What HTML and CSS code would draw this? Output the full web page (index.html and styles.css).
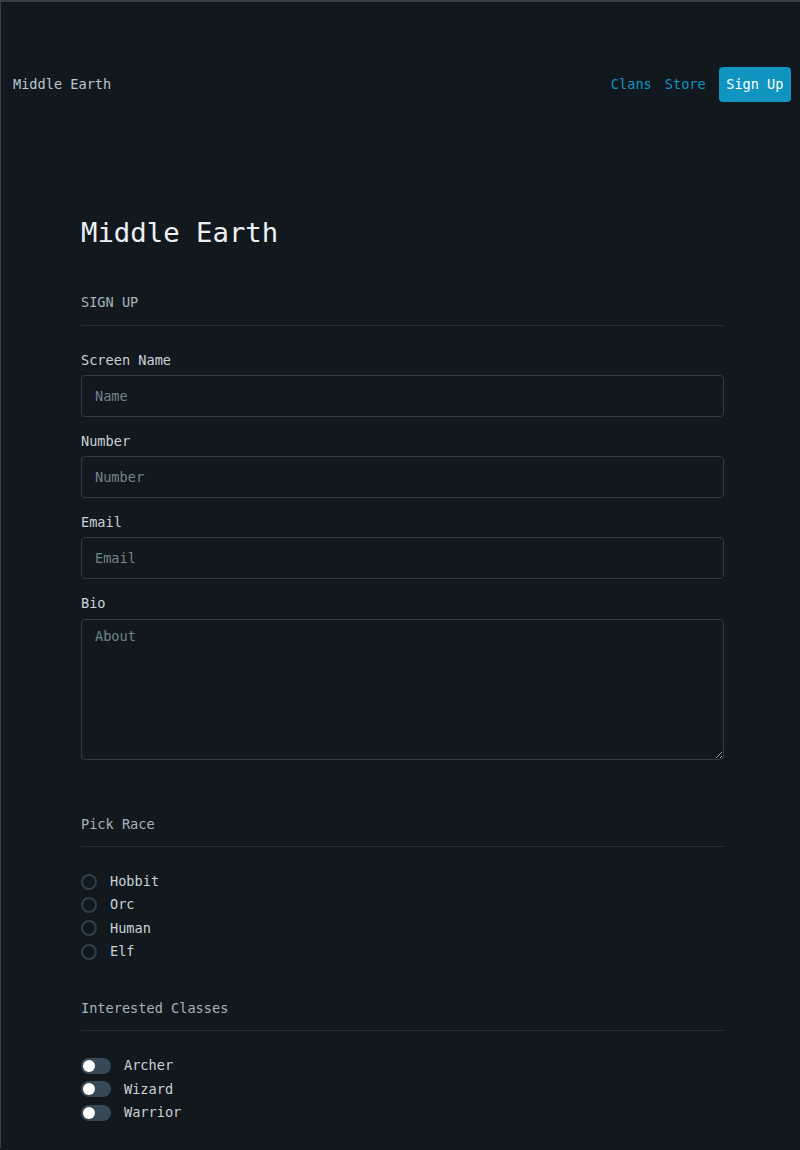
FILE: index.html
```html
<!DOCTYPE html>
<html lang="en">
<head>
<meta charset="utf-8">
<title>Middle Earth</title>
<link rel="stylesheet" href="styles.css">
</head>
<body>
<div class="frame">
  <header class="topbar">
    <a class="brand" href="#">Middle Earth</a>
    <nav class="nav">
      <a class="nav-link" href="#">Clans</a>
      <a class="nav-link" href="#">Store</a>
      <a class="nav-btn" href="#">Sign Up</a>
    </nav>
  </header>

  <main class="main">
    <h1 class="title">Middle Earth</h1>

    <form class="form">
      <h2 class="section-head">SIGN UP</h2>

      <div class="field">
        <label class="label" for="name">Screen Name</label>
        <input class="input" id="name" type="text" placeholder="Name">
      </div>
      <div class="field">
        <label class="label" for="number">Number</label>
        <input class="input" id="number" type="text" placeholder="Number">
      </div>
      <div class="field">
        <label class="label" for="email">Email</label>
        <input class="input" id="email" type="text" placeholder="Email">
      </div>
      <div class="field">
        <label class="label label-bio" for="bio">Bio</label>
        <textarea class="textarea" id="bio" placeholder="About"></textarea>
      </div>

      <h2 class="section-head section-race">Pick Race</h2>
      <div class="choices">
        <label class="choice"><span class="radio"></span>Hobbit</label>
        <label class="choice"><span class="radio"></span>Orc</label>
        <label class="choice"><span class="radio"></span>Human</label>
        <label class="choice"><span class="radio"></span>Elf</label>
      </div>

      <h2 class="section-head section-classes">Interested Classes</h2>
      <div class="choices toggles">
        <label class="choice"><span class="switch"><span class="knob"></span></span>Archer</label>
        <label class="choice"><span class="switch"><span class="knob"></span></span>Wizard</label>
        <label class="choice"><span class="switch"><span class="knob"></span></span>Warrior</label>
      </div>
    </form>
  </main>
</div>
</body>
</html>
```

FILE: styles.css
```css
html, body {
  margin: 0;
  padding: 0;
  background: #11191f;
}

body {
  font-family: "DejaVu Sans Mono", "Liberation Mono", monospace;
  font-size: 13.6px;
  line-height: 21px;
  color: #bbc6ce;
}

.frame {
  min-height: 1148px;
  border-top: 2px solid #3b3e42;
  border-left: 1px solid #3b3e42;
  box-sizing: border-box;
}

.topbar {
  display: flex;
  justify-content: space-between;
  align-items: center;
  padding: 65px 9px 0 12px;
}

.brand {
  color: #bbc6ce;
  text-decoration: none;
}

.nav {
  display: flex;
  align-items: center;
  gap: 13px;
}

.nav-link {
  color: #1095c1;
  text-decoration: none;
}

.nav-btn {
  display: block;
  background: #1095c1;
  color: #ffffff;
  text-decoration: none;
  padding: 7px 7.5px;
  border-radius: 4px;
}

.main {
  width: 643px;
  margin-left: 80px;
  padding-top: 114px;
}

.title {
  margin: 0;
  font-size: 27.3px;
  line-height: 33px;
  font-weight: normal;
  color: #edf0f3;
}

.form {
  margin-top: 43px;
}

.section-head {
  margin: 0;
  font-size: 13.6px;
  line-height: 21px;
  font-weight: normal;
  color: #a6b2bb;
  padding-bottom: 12px;
  border-bottom: 1px solid #1f2d38;
  margin-bottom: 24px;
}

.field {
  display: flex;
  flex-direction: column;
  margin-bottom: 14.5px;
}

.label {
  color: #c9d2d8;
  margin-bottom: 3.5px;
}

.label-bio {
  margin-bottom: 4.5px;
}

.input,
.textarea {
  box-sizing: border-box;
  width: 100%;
  margin: 0;
  background: #11191f;
  border: 1px solid #2b3d49;
  border-radius: 4px;
  font-family: inherit;
  font-size: 13.6px;
  color: #bbc6ce;
  padding: 0 13px;
  outline: none;
}

.input {
  height: 42px;
}

.textarea {
  height: 141px;
  padding: 6px 13px;
  line-height: 21px;
  resize: vertical;
  display: block;
}

.input::placeholder,
.textarea::placeholder {
  color: #73828c;
}

.section-race {
  margin-top: 54.5px;
  padding-bottom: 10.5px;
  margin-bottom: 24.5px;
}

.choices {
  display: flex;
  flex-direction: column;
  gap: 2.4px;
}

.choice {
  display: flex;
  align-items: center;
  color: #c9d2d8;
}

.radio {
  width: 16px;
  height: 16px;
  box-sizing: border-box;
  border: 2px solid #2f404c;
  border-radius: 50%;
  margin-right: 13px;
  flex: none;
}

.section-classes {
  margin-top: 36px;
  padding-bottom: 11px;
  margin-bottom: 24px;
}

.toggles {
  gap: 2.5px;
}

.switch {
  width: 30px;
  height: 16px;
  border-radius: 8px;
  background: #374956;
  margin-right: 13px;
  flex: none;
  display: flex;
  align-items: center;
  padding-left: 2px;
  box-sizing: border-box;
}

.knob {
  width: 12px;
  height: 12px;
  border-radius: 50%;
  background: #ffffff;
}
```
